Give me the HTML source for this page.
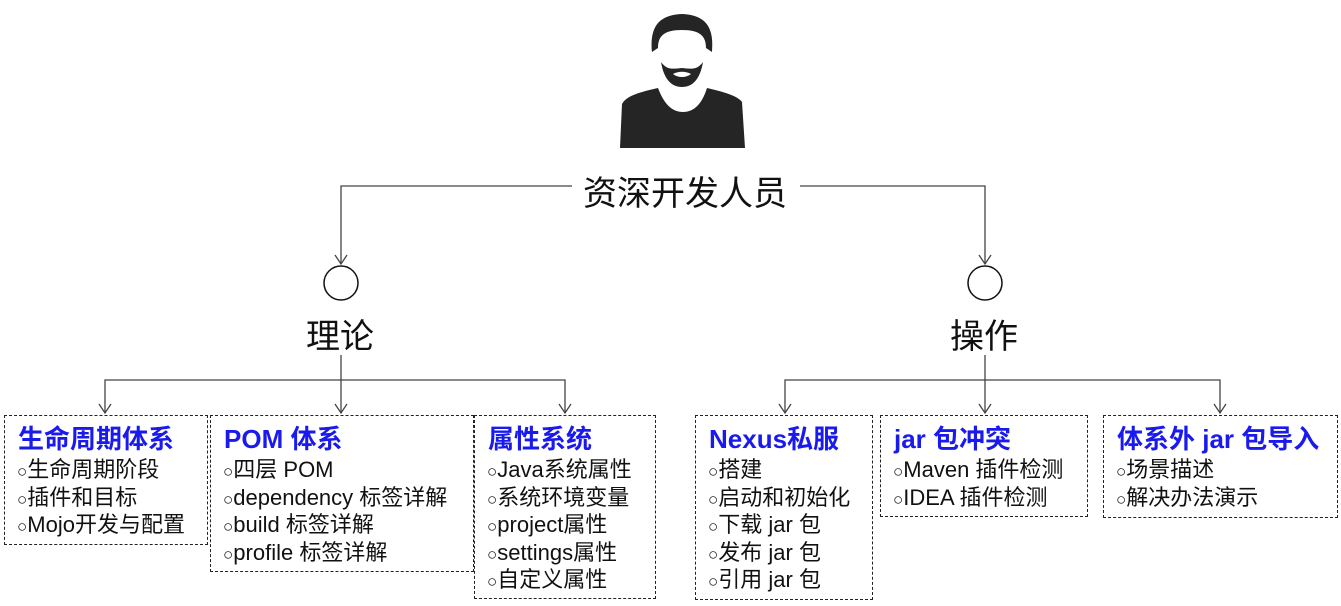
<!DOCTYPE html>
<html><head><meta charset="utf-8"><style>
body{margin:0;width:1341px;height:606px;background:#fff;position:relative;overflow:hidden;font-family:"Liberation Sans","Noto Sans CJK SC",sans-serif;}
.t{position:absolute;color:#111;white-space:nowrap}
.box{position:absolute;border:1px dashed #222;box-sizing:border-box;padding:8px 0 0 13px}
.box b{display:block;color:#1a1aee;font-size:26px;line-height:31px;height:31px;font-weight:bold;margin-bottom:1px}
.box div{font-size:22px;line-height:27.5px;height:27.5px;overflow:visible;color:#111;margin-left:-1px;white-space:nowrap}
.box i{font-style:normal;font-size:17px;line-height:1}
</style></head><body>
<svg width="1341" height="606" style="position:absolute;left:0;top:0">
<g stroke="#444" stroke-width="1.3" fill="none">
<polyline points="572,186 341,186 341,264"/>
<polyline points="800,186 985,186 985,264"/>
<polyline points="335,255 341,264 347,255"/>
<polyline points="979,255 985,264 991,255"/>
<circle cx="341" cy="283" r="17" stroke="#111" stroke-width="1.5"/>
<circle cx="985" cy="283" r="17" stroke="#111" stroke-width="1.5"/>
<line x1="341" y1="355" x2="341" y2="413"/>
<polyline points="105,413 105,380 565,380 565,413"/>
<line x1="985" y1="355" x2="985" y2="413"/>
<polyline points="785,413 785,380 1220,380 1220,413"/>
<polyline points="99,404 105,413 111,404"/><polyline points="335,404 341,413 347,404"/><polyline points="559,404 565,413 571,404"/>
<polyline points="779,404 785,413 791,404"/><polyline points="979,404 985,413 991,404"/><polyline points="1214,404 1220,413 1226,404"/>
</g>
<g fill="#252525">
<path d="M652,52 C650,30 656,15 682,14 C708,15 714,30 712,52 L706,48 C706,36 700,30 682,30 C664,30 658,36 658,48 Z"/>
<path d="M661,62 C664,80 672,87 682,87 C692,87 700,80 703,62 C697,70 692,69 682,68 C672,69 667,70 661,62 Z M673,74 C678,71 686,71 691,74 C686,78 678,78 673,74Z" fill-rule="evenodd"/>
<path d="M620,148 L622,104 C626,96 640,92 658,88 C664,104 672,112 683,112 C694,112 702,104 707,88 C724,92 738,96 742,102 L745,148 Z"/>
</g>
</svg>
<div class="t" style="left:583px;top:166px;font-size:34px">资深开发人员</div>
<div class="t" style="left:306px;top:309px;font-size:34px">理论</div>
<div class="t" style="left:950px;top:309px;font-size:34px">操作</div>
<div class="box" style="left:4px;top:415px;width:204px;height:130px"><b>生命周期体系</b><div><i>○</i>生命周期阶段</div><div><i>○</i>插件和目标</div><div><i>○</i>Mojo开发与配置</div></div>
<div class="box" style="left:210px;top:415px;width:264px;height:157px"><b>POM 体系</b><div><i>○</i>四层 POM</div><div><i>○</i>dependency 标签详解</div><div><i>○</i>build 标签详解</div><div><i>○</i>profile 标签详解</div></div>
<div class="box" style="left:474px;top:415px;width:182px;height:184px"><b>属性系统</b><div><i>○</i>Java系统属性</div><div><i>○</i>系统环境变量</div><div><i>○</i>project属性</div><div><i>○</i>settings属性</div><div><i>○</i>自定义属性</div></div>
<div class="box" style="left:695px;top:415px;width:178px;height:185px"><b>Nexus私服</b><div><i>○</i>搭建</div><div><i>○</i>启动和初始化</div><div><i>○</i>下载 jar 包</div><div><i>○</i>发布 jar 包</div><div><i>○</i>引用 jar 包</div></div>
<div class="box" style="left:880px;top:415px;width:208px;height:102px"><b>jar 包冲突</b><div><i>○</i>Maven 插件检测</div><div><i>○</i>IDEA 插件检测</div></div>
<div class="box" style="left:1103px;top:415px;width:235px;height:103px"><b>体系外 jar 包导入</b><div><i>○</i>场景描述</div><div><i>○</i>解决办法演示</div></div>
</body></html>
